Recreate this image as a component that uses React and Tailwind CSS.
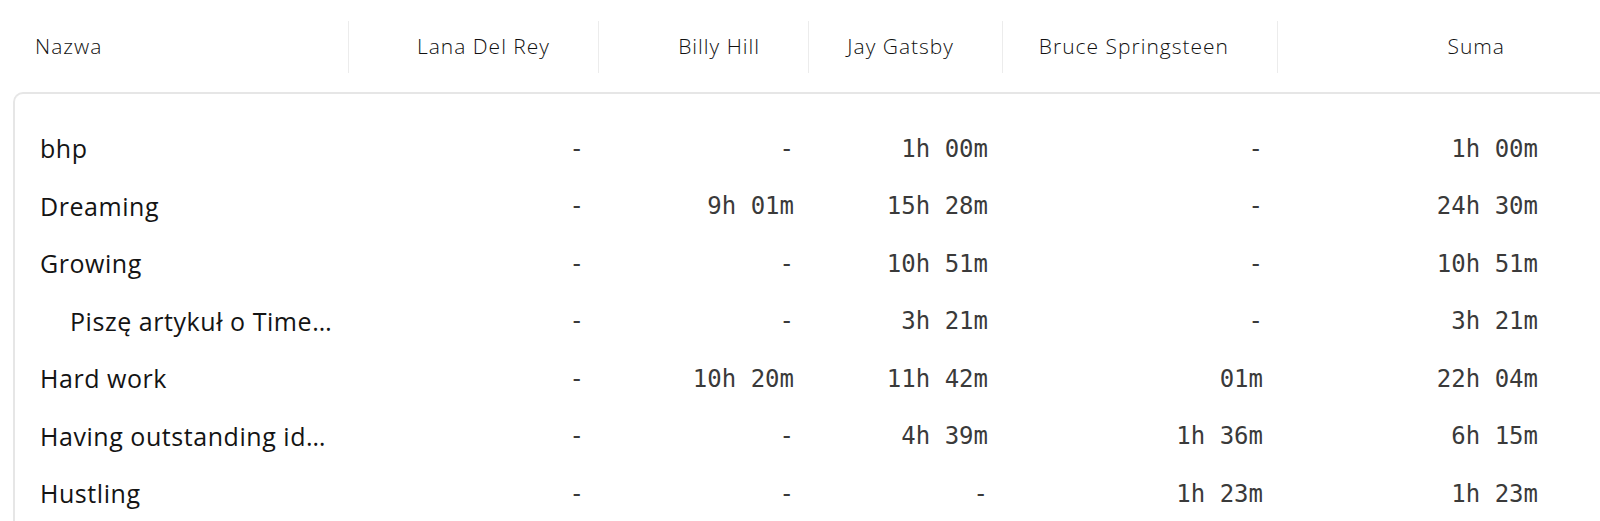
import React from "react"

const columns = [
    { key: "name", label: "Nazwa", width: "w-[349px]" },
    { key: "lana", label: "Lana Del Rey", width: "w-[250px]" },
    { key: "billy", label: "Billy Hill", width: "w-[210px]" },
    { key: "jay", label: "Jay Gatsby", width: "w-[194px]" },
    { key: "bruce", label: "Bruce Springsteen", width: "w-[275px]" },
    { key: "sum", label: "Suma", width: "w-[275px]" },
]

const rows = [
    { name: "bhp", values: ["-", "-", "1h 00m", "-", "1h 00m"] },
    { name: "Dreaming", values: ["-", "9h 01m", "15h 28m", "-", "24h 30m"] },
    { name: "Growing", values: ["-", "-", "10h 51m", "-", "10h 51m"] },
    { name: "Piszę artykuł o Time…", sub: true, values: ["-", "-", "3h 21m", "-", "3h 21m"] },
    { name: "Hard work", values: ["-", "10h 20m", "11h 42m", "01m", "22h 04m"] },
    { name: "Having outstanding id…", values: ["-", "-", "4h 39m", "1h 36m", "6h 15m"] },
    { name: "Hustling", values: ["-", "-", "-", "1h 23m", "1h 23m"] },
]

const sans = "font-['Open_Sans',sans-serif]"
const mono = "font-['DejaVu_Sans_Mono',monospace]"

const App = () => {
    return (
        <div className={`h-[521px] w-[1600px] overflow-hidden bg-white ${sans}`}>
            <div className="w-[1553px] pt-[21px]">
                {/* header */}
                <div className="flex h-[52px] text-[21px] font-light tracking-[1px] text-[#111]">
                    {columns.map((col, index) => (
                        <div
                            key={col.key}
                            className={`${col.width} shrink-0 flex items-center ${
                                index === 0 ? "pl-[35px]" : "justify-end pr-12"
                            } ${index < columns.length - 1 ? "border-r border-[#ececec]" : ""}`}
                        >
                            {col.label}
                        </div>
                    ))}
                </div>

                {/* body card */}
                <div className="ml-[13px] mt-[19px] w-[1620px] rounded-tl-[10px] border-2 border-r-0 border-[#e6e6e6] pt-[26px]">
                    {rows.map((row) => (
                        <div key={row.name} className="flex h-[57.5px] items-center">
                            <div
                                className={`w-[334px] shrink-0 text-[25px] tracking-[0.55px] text-[#141414] ${
                                    row.sub ? "pl-[55px]" : "pl-[25px]"
                                }`}
                            >
                                {row.name}
                            </div>
                            {row.values.map((value, i) => (
                                <div
                                    key={i}
                                    className={`${columns[i + 1].width} shrink-0 pr-[15px] text-right text-[24px] whitespace-pre text-[#3a3a3a] ${mono}`}
                                >
                                    {value}
                                </div>
                            ))}
                        </div>
                    ))}
                </div>
            </div>
        </div>
    )
}

export default App
